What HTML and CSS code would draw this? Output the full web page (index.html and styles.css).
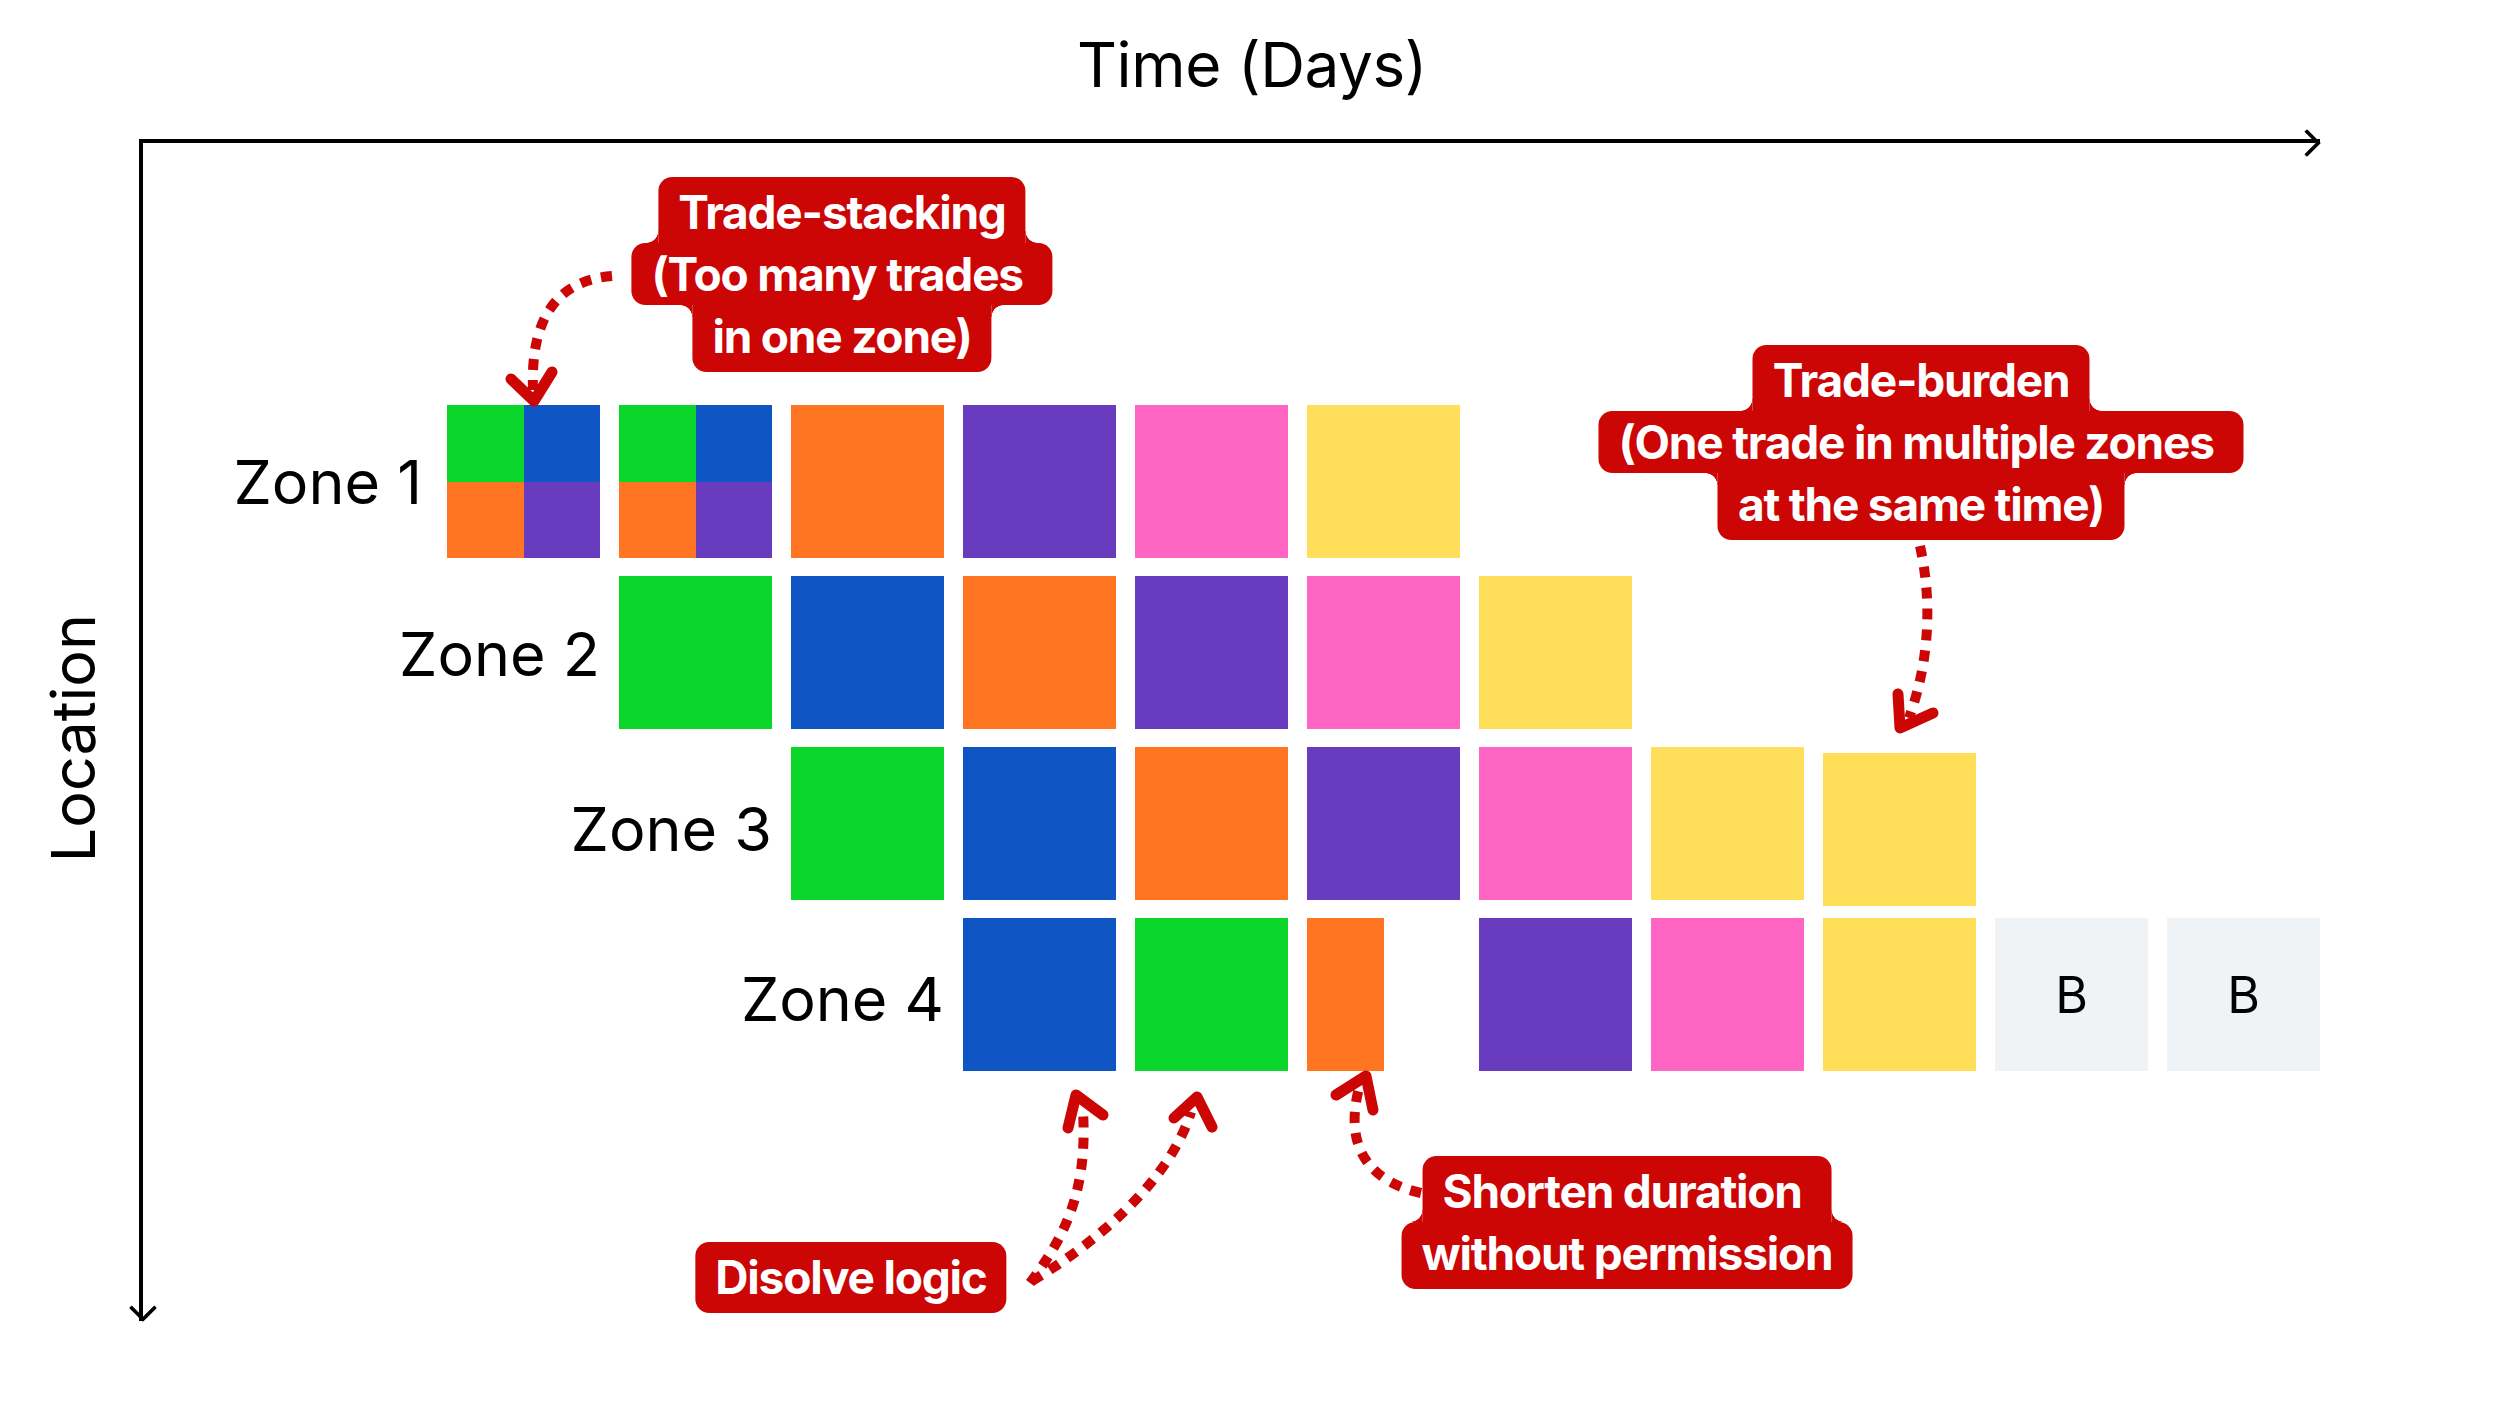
FILE: index.html
```html
<!DOCTYPE html>
<html lang="en">
<head>
<meta charset="utf-8">
<title>Trade flow issues</title>
<link rel="stylesheet" href="styles.css">
</head>
<body>
<main class="page">
  <header class="title">Time (Days)</header>
  <section class="plot">
    <div class="y-label">Location</div>
    <div class="x-axis"></div>
    <div class="y-axis"></div>
    <div class="board">
      <div class="zones">
        <div class="zone-label z1">Zone 1</div>
        <div class="c r1 quad"><i class="green"></i><i class="blue"></i><i class="orange"></i><i class="purple"></i></div>
        <div class="c r1 quad"><i class="green"></i><i class="blue"></i><i class="orange"></i><i class="purple"></i></div>
        <div class="c r1 orange"></div>
        <div class="c r1 purple"></div>
        <div class="c r1 pink"></div>
        <div class="c r1 yellow"></div>

        <div class="zone-label z2">Zone 2</div>
        <div class="c r2 green"></div>
        <div class="c r2 blue"></div>
        <div class="c r2 orange"></div>
        <div class="c r2 purple"></div>
        <div class="c r2 pink"></div>
        <div class="c r2 yellow"></div>

        <div class="zone-label z3">Zone 3</div>
        <div class="c r3 green"></div>
        <div class="c r3 blue"></div>
        <div class="c r3 orange"></div>
        <div class="c r3 purple"></div>
        <div class="c r3 pink"></div>
        <div class="c r3 yellow"></div>
        <div class="c r3 yellow drop"></div>

        <div class="zone-label z4">Zone 4</div>
        <div class="c r4 blue"></div>
        <div class="c r4 green"></div>
        <div class="c r4 orange half"></div>
        <div class="c r4 purple"></div>
        <div class="c r4 pink"></div>
        <div class="c r4 yellow"></div>
        <div class="c r4 buffer">B</div>
        <div class="c r4 buffer">B</div>
      </div>
    </div>
  </section>

  <div class="callout cal-stack">
    <span class="ln top-narrow">Trade-stacking</span>
    <span class="ln wide">(Too many trades&nbsp;</span>
    <span class="ln bottom-narrow last">in one zone)</span>
  </div>
  <div class="callout cal-burden">
    <span class="ln top-narrow">Trade-burden</span>
    <span class="ln wide">(One trade in multiple zones&nbsp;</span>
    <span class="ln bottom-narrow last">at the same time)</span>
  </div>
  <div class="callout cal-dissolve">
    <span class="ln single">Disolve logic</span>
  </div>
  <div class="callout cal-shorten">
    <span class="ln top-narrow">Shorten duration&nbsp;</span>
    <span class="ln wide-bottom last">without permission</span>
  </div>

  <svg class="arrows" width="2500" height="1406" viewBox="0 0 2500 1406" aria-hidden="true">
    <g class="dash">
      <path d="M 612 276 C 562 280, 530 312, 533 390"/>
      <path d="M 1920 546 C 1932 600, 1930 660, 1909 718"/>
      <path d="M 1030 1283 C 1062 1240, 1088 1195, 1083 1112"/>
      <path d="M 1032 1281 C 1100 1240, 1170 1180, 1191 1112"/>
      <path d="M 1421 1193 C 1372 1182, 1343 1150, 1359 1088"/>
    </g>
    <g class="head">
      <path d="M 511 379 L 534 401 L 552 372"/>
      <path d="M 1898 694 L 1900 728 L 1933 713"/>
      <path d="M 1068 1128 L 1076 1095 L 1103 1115"/>
      <path d="M 1174 1118 L 1197 1097 L 1212 1127"/>
      <path d="M 1336 1095 L 1366 1076 L 1373 1110"/>
    </g>
  </svg>
</main>
</body>
</html>
```

FILE: styles.css
```css
* { box-sizing: border-box; }

html, body {
  margin: 0;
  padding: 0;
  background: #ffffff;
}

body {
  font-family: Inter, "Noto Sans", "Liberation Sans", sans-serif;
  color: #000;
}

.page {
  position: relative;
  width: 2500px;
  height: 1406px;
  overflow: hidden;
}

.title {
  height: 139px;
  padding-top: 27px;
  padding-left: 4px;
  font-size: 62px;
  line-height: 75px;
  letter-spacing: -0.4px;
  text-align: center;
  font-weight: 400;
}

.plot {
  display: grid;
  grid-template-columns: 139px 4px 2177px;
  grid-template-rows: 4px 1178px;
}

.y-label {
  grid-column: 1;
  grid-row: 1 / 3;
  justify-self: center;
  align-self: center;
  margin-top: 16px;
  margin-left: 6px;
  writing-mode: vertical-rl;
  transform: rotate(180deg);
  font-size: 61px;
  line-height: 74px;
  white-space: nowrap;
}

.x-axis {
  grid-column: 2 / 4;
  grid-row: 1;
  background: #000;
  position: relative;
}

.x-axis::after {
  content: "";
  position: absolute;
  right: 3px;
  top: 50%;
  width: 16px;
  height: 16px;
  margin-top: -8px;
  border-top: 4px solid #000;
  border-right: 4px solid #000;
  border-radius: 1px;
  transform: rotate(45deg);
}

.y-axis {
  grid-column: 2;
  grid-row: 2;
  background: #000;
  position: relative;
}

.y-axis::after {
  content: "";
  position: absolute;
  bottom: 3px;
  left: 50%;
  width: 16px;
  height: 16px;
  margin-left: -8px;
  border-bottom: 4px solid #000;
  border-right: 4px solid #000;
  border-radius: 1px;
  transform: rotate(45deg);
}

.board {
  grid-column: 3;
  grid-row: 2;
}

.zones {
  display: grid;
  grid-template-columns: 285px repeat(11, 153px);
  grid-template-rows: repeat(4, 153px);
  column-gap: 19px;
  row-gap: 18px;
  margin-top: 262px;
}

.zone-label {
  justify-self: end;
  align-self: center;
  font-size: 61px;
  line-height: 74px;
  white-space: nowrap;
}

.z1 { grid-row: 1; grid-column: 1 / 2; margin-right: 6px; }
.z2 { grid-row: 2; grid-column: 1 / 3; margin-top: 3px; }
.z3 { grid-row: 3; grid-column: 1 / 4; margin-top: 10px; }
.z4 { grid-row: 4; grid-column: 1 / 5; margin-top: 9px; }

.r1 { grid-row: 1; }
.r2 { grid-row: 2; }
.r3 { grid-row: 3; }
.r4 { grid-row: 4; }

.c { width: 153px; height: 153px; }

.green { background: #0bd62b; }
.blue { background: #0f56c4; }
.orange { background: #ff7521; }
.purple { background: #693bbf; }
.pink { background: #ff66c4; }
.yellow { background: #ffde59; }

.quad {
  display: grid;
  grid-template-columns: 1fr 1fr;
  grid-template-rows: 1fr 1fr;
}

.quad i { display: block; }

.half { width: 77px; }

.drop { margin-top: 6px; }

.buffer {
  background: #f0f3f6;
  display: flex;
  align-items: center;
  justify-content: center;
  font-size: 50px;
}

/* Callouts */
.callout {
  position: absolute;
  transform: translateX(-50%);
  font-weight: 700;
  font-size: 46px;
  line-height: 62px;
  letter-spacing: -1.2px;
  color: #fff;
  white-space: nowrap;
}

.cal-stack { left: 842px; top: 177px; }
.cal-burden { left: 1921px; top: 345px; }
.cal-dissolve { left: 851px; top: 1242px; }
.cal-shorten { left: 1627px; top: 1156px; }

.ln {
  display: block;
  position: relative;
  width: fit-content;
  margin: 0 auto;
  padding: 0 20px;
  background: #cc0505;
}

.ln.top-narrow {
  padding-top: 4px;
  border-radius: 14px 14px 0 0;
}

.ln.wide { border-radius: 14px; }

.ln.wide-bottom { border-radius: 14px; padding-bottom: 5px; }

.ln.bottom-narrow {
  padding-bottom: 5px;
  border-radius: 0 0 14px 14px;
}

.ln.single {
  padding: 4px 20px 5px;
  border-radius: 14px;
}

.ln.top-narrow::before,
.ln.top-narrow::after,
.ln.bottom-narrow::before,
.ln.bottom-narrow::after {
  content: "";
  position: absolute;
  width: 12px;
  height: 12px;
}

.ln.top-narrow::before {
  left: -12px;
  bottom: 0;
  background: radial-gradient(circle at 0 0, transparent 11.5px, #cc0505 12px);
}

.ln.top-narrow::after {
  right: -12px;
  bottom: 0;
  background: radial-gradient(circle at 100% 0, transparent 11.5px, #cc0505 12px);
}

.ln.bottom-narrow::before {
  left: -12px;
  top: 0;
  background: radial-gradient(circle at 0 100%, transparent 11.5px, #cc0505 12px);
}

.ln.bottom-narrow::after {
  right: -12px;
  top: 0;
  background: radial-gradient(circle at 100% 100%, transparent 11.5px, #cc0505 12px);
}

/* Arrows overlay */
.arrows {
  position: absolute;
  left: 0;
  top: 0;
  pointer-events: none;
}

.arrows .dash path {
  fill: none;
  stroke: #cc0505;
  stroke-width: 10;
  stroke-dasharray: 11 10;
}

.arrows .head path {
  fill: none;
  stroke: #cc0505;
  stroke-width: 11;
  stroke-linecap: round;
  stroke-linejoin: round;
}
```
